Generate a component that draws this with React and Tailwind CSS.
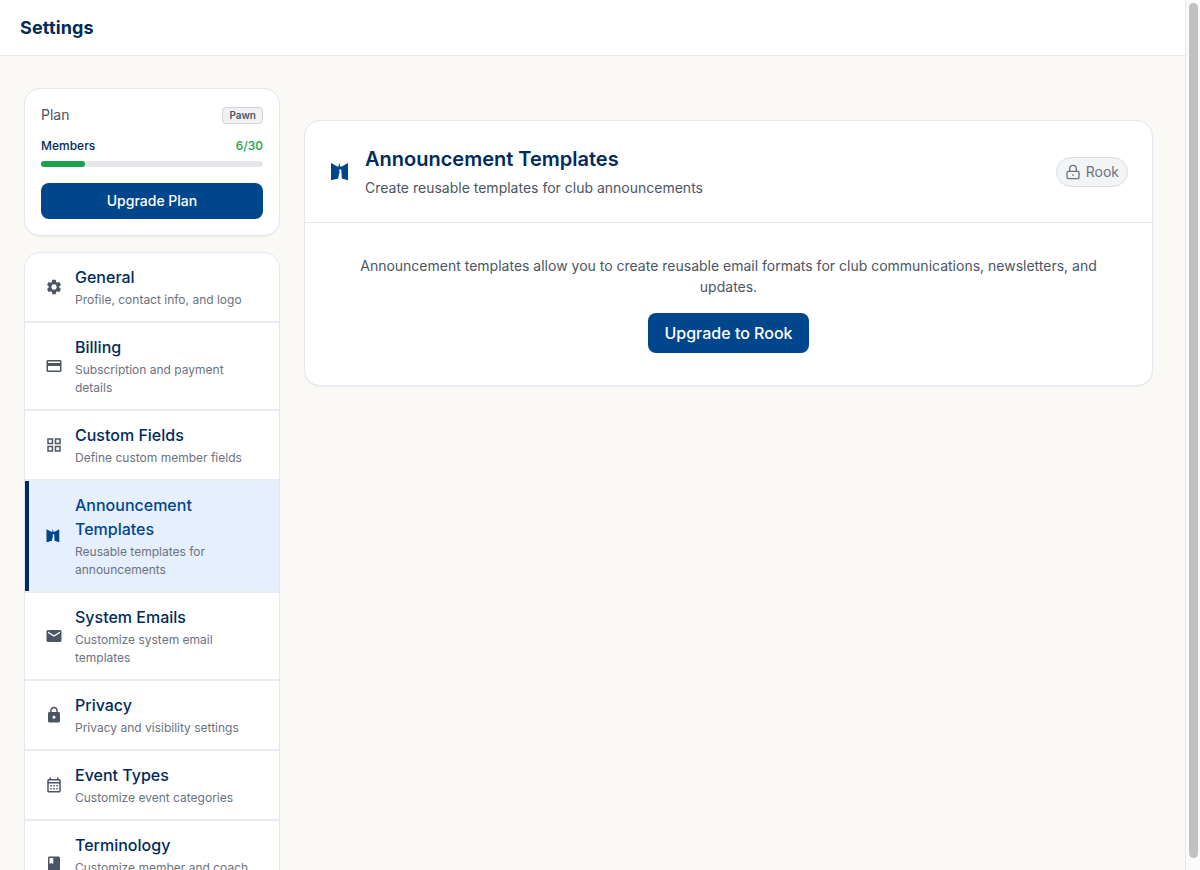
import React from "react";
import { MdSettings, MdCreditCard, MdOutlineGridView, MdEmail, MdLock, MdOutlineCalendarMonth, MdBook } from "react-icons/md";

function RookIcon({ className }) {
  return (
    <svg viewBox="0 0 24 24" className={className} fill="currentColor">
      <path d="M2 3 L8.5 6.4 L9.6 6.4 L10.4 2.6 L11.2 6.4 L12.8 6.4 L19 3 L19 20.2 L12.8 18.4 L12.3 9.5 L10.2 9.5 L10.6 13.5 L9.9 14 L9.3 18.4 L2 20.2 Z" />
    </svg>
  );
}

function SmallLock({ className }) {
  return (
    <svg viewBox="0 0 24 24" className={className} fill="none" stroke="currentColor" strokeWidth="2" strokeLinecap="round" strokeLinejoin="round">
      <rect x="3" y="11" width="18" height="11" rx="2" />
      <path d="M7 11V7a5 5 0 0 1 10 0v4" />
      <path d="M12 16.5h.01" strokeWidth="2.6" />
    </svg>
  );
}

const items = [
  { t: "General", d: "Profile, contact info, and logo", I: MdSettings },
  { t: "Billing", d: "Subscription and payment details", I: MdCreditCard },
  { t: "Custom Fields", d: "Define custom member fields", I: MdOutlineGridView },
  { t: "Announcement Templates", d: "Reusable templates for announcements", I: RookIcon, active: true },
  { t: "System Emails", d: "Customize system email templates", I: MdEmail },
  { t: "Privacy", d: "Privacy and visibility settings", I: MdLock },
  { t: "Event Types", d: "Customize event categories", I: MdOutlineCalendarMonth },
  { t: "Terminology", d: "Customize member and coach terms", I: MdBook },
];

export default function App() {
  return (
    <div className="flex h-[870px] overflow-hidden bg-white font-['Inter',sans-serif]">
      <div className="w-[1185px] shrink-0 flex flex-col h-full overflow-hidden bg-[#faf9f5]">
        <header className="h-[56px] shrink-0 bg-white border-b border-[#e5e7eb] flex items-center px-5">
          <h1 className="text-[18px] font-bold tracking-[0.15px] text-[#002b5c]">Settings</h1>
        </header>
        <div className="flex gap-6 pl-6 pr-8 pt-8">
          <aside className="w-[256px] shrink-0 flex flex-col gap-4">
            <section className="bg-white border border-[#e2e8f0] rounded-2xl shadow-[0_1px_2px_rgba(0,0,0,0.05)] p-4">
              <div className="flex items-center justify-between">
                <span className="text-sm text-[#4b5563]">Plan</span>
                <span className="text-[10px] leading-[13px] font-semibold px-[6px] py-px rounded bg-[#f0f1f3] border border-[#d1d5db] text-[#4b5563]">Pawn</span>
              </div>
              <div className="flex items-center justify-between mt-[13px] text-xs font-medium">
                <span className="text-[#002b5c]">Members</span>
                <span className="text-[#16a34a]">6/30</span>
              </div>
              <div className="h-1.5 mt-[7px] rounded-full bg-[#e5e7eb]">
                <div className="h-full w-[20%] rounded-full bg-[#16a34a]" />
              </div>
              <button className="w-full h-9 mt-4 rounded-lg bg-[#00468c] text-white text-sm font-medium">Upgrade Plan</button>
            </section>
            <nav className="bg-white border border-[#e2e8f0] rounded-t-2xl overflow-hidden">
              {items.map(({ t, d, I, active }) => (
                <a key={t} className="block border-b-2 border-[#e9ebef]">
                  <div className={`flex items-center gap-3 pl-4 pr-4 py-3 border-l-4 ${active ? "bg-[#e5effd] border-[#002b5c]" : "border-transparent"}`}>
                    <I className={`w-[18px] h-[18px] shrink-0 ${active ? "text-[#00468c]" : "text-[#4b5563]"}`} />
                    <div className="min-w-0">
                      <div className={`text-base font-medium ${active ? "text-[#00468c]" : "text-[#002b5c]"}`}>{t}</div>
                      <div className="text-xs leading-[18px] text-[#6b7280] mt-0.5">{d}</div>
                    </div>
                  </div>
                </a>
              ))}
            </nav>
          </aside>
          <main className="flex-1 min-w-0 pt-8">
            <section className="bg-white border border-[#e2e8f0] rounded-2xl shadow-[0_1px_2px_rgba(0,0,0,0.05)]">
              <div className="flex items-center justify-between p-6 border-b border-[#e5e7eb]">
                <div className="flex items-center gap-3">
                  <RookIcon className="w-6 h-6 text-[#00468c]" />
                  <div>
                    <h2 className="text-xl font-semibold text-[#002b5c]">Announcement Templates</h2>
                    <p className="text-sm text-[#4b5563] mt-[5px]">Create reusable templates for club announcements</p>
                  </div>
                </div>
                <span className="flex items-center gap-[5px] h-[30px] px-2 rounded-full bg-[#f3f4f6] border border-[#d9dce1] text-sm text-[#6b7280]">
                  <SmallLock className="w-4 h-4" />Rook
                </span>
              </div>
              <div className="p-8 text-center">
                <p className="text-sm leading-[21px] text-[#4b5563]">Announcement templates allow you to create reusable email formats for club communications, newsletters, and updates.</p>
                <button className="h-10 px-4 mt-4 rounded-lg bg-[#00468c] text-white text-base font-medium">Upgrade to Rook</button>
              </div>
            </section>
          </main>
        </div>
      </div>
      <div className="w-[15px] shrink-0 bg-[#fafafa] border-l border-[#e8e8e8] pl-[3px] pr-[2px] pt-[3px]">
        <div className="h-[855px] rounded-full bg-[#c1c1c1]" />
      </div>
    </div>
  );
}
